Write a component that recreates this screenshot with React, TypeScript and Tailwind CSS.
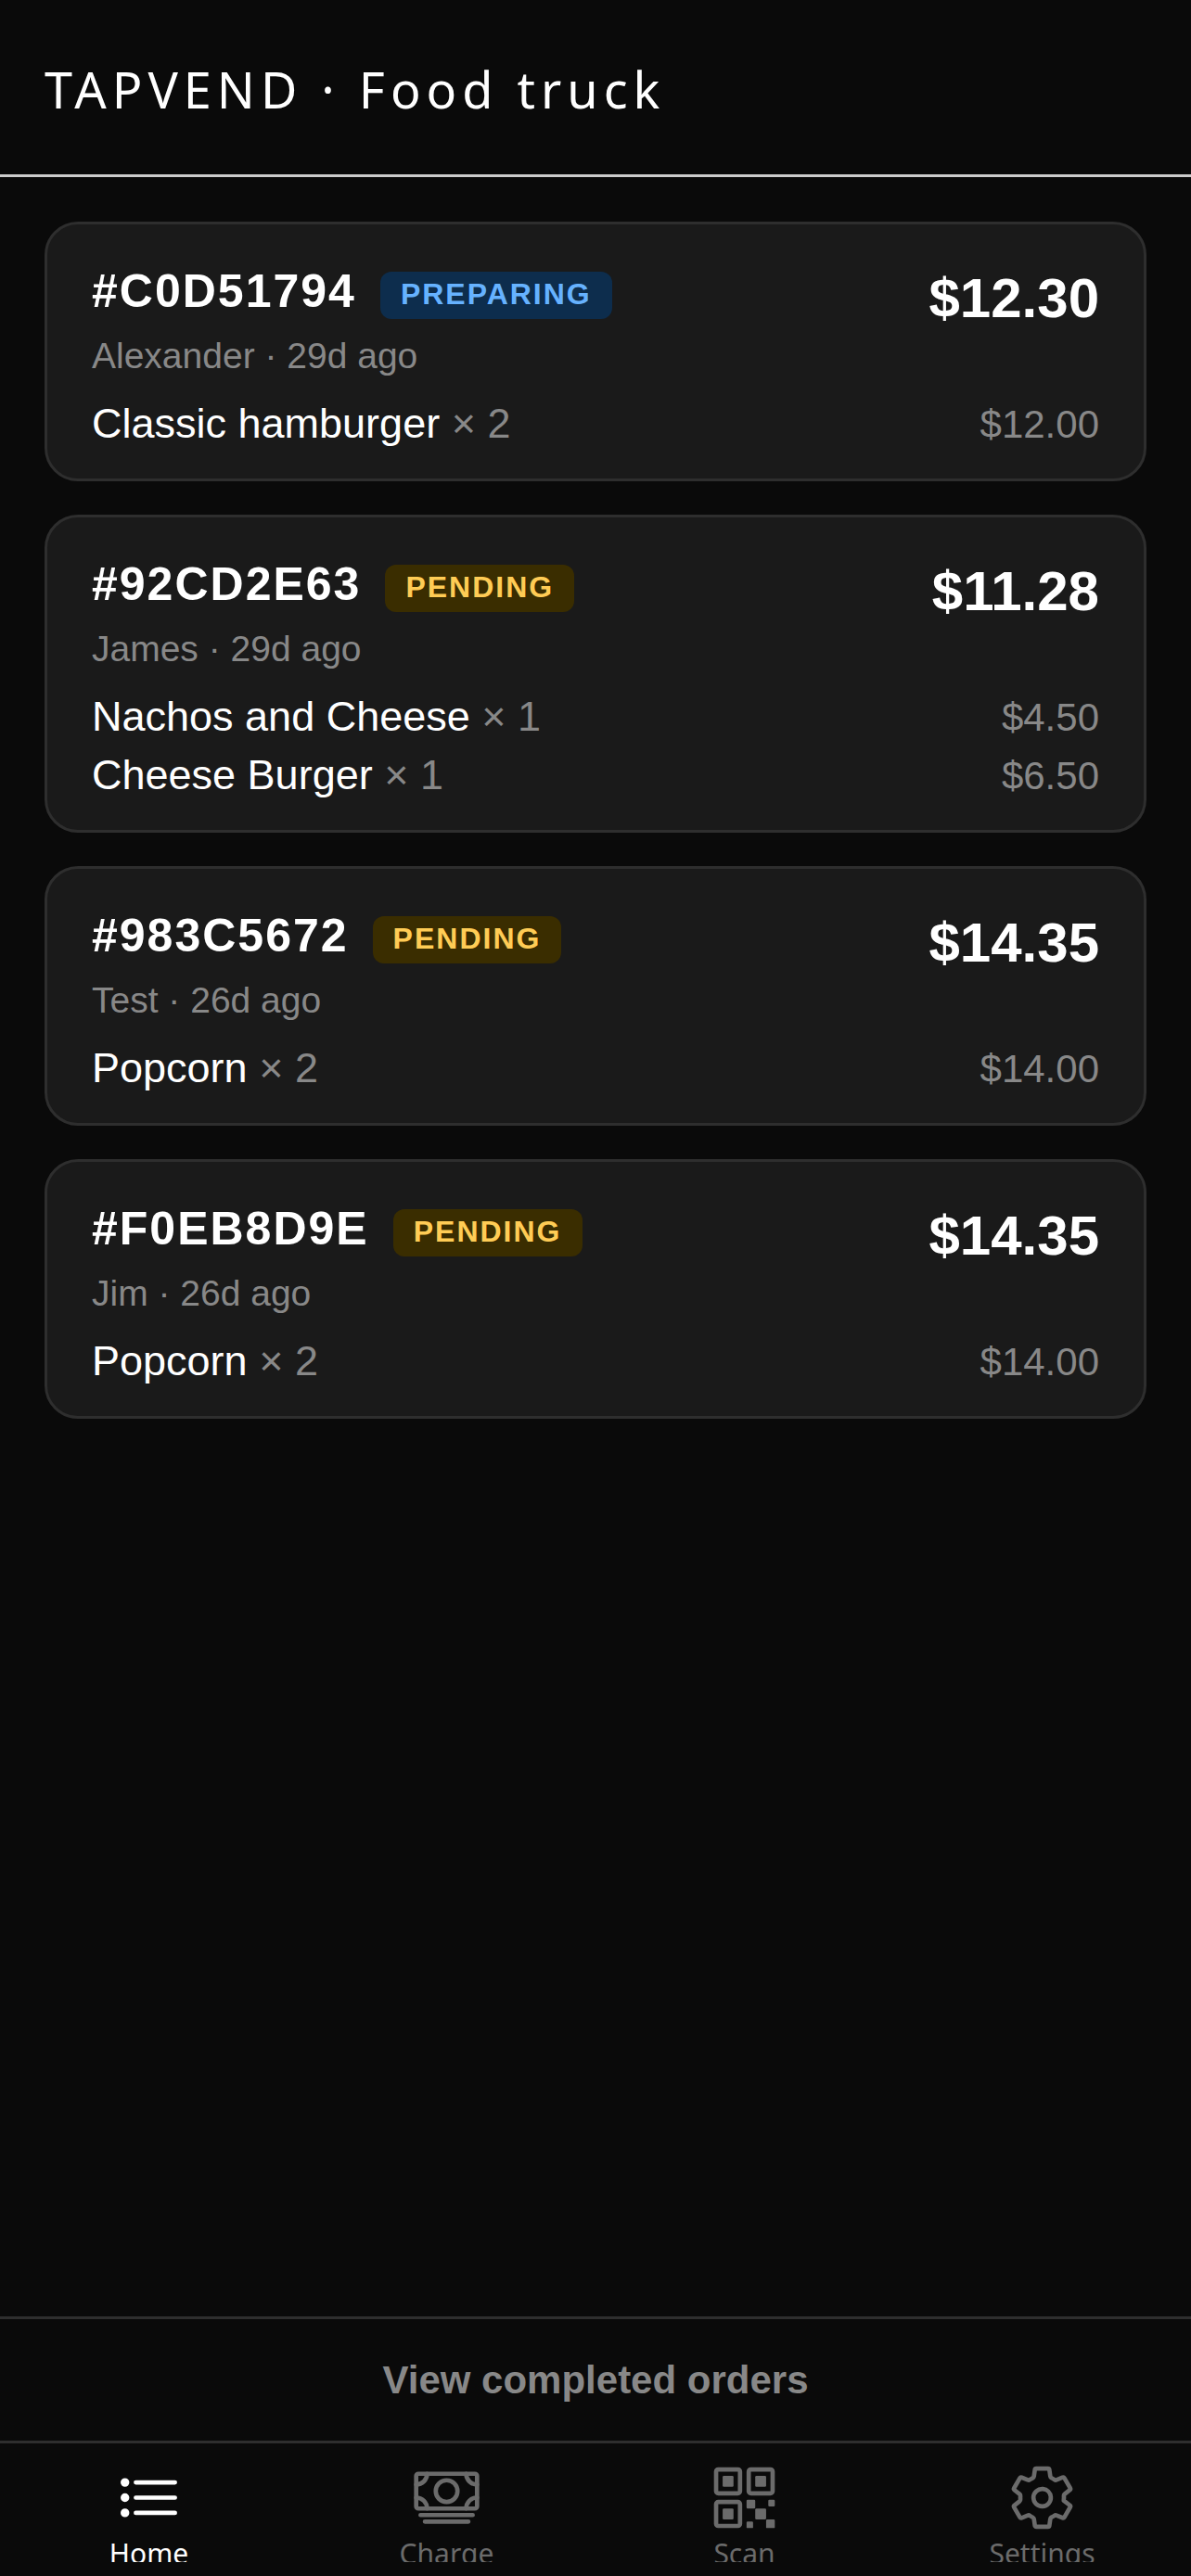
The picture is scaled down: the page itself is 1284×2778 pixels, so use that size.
import type { IconType } from 'react-icons';
import { IoCashOutline, IoListOutline, IoQrCodeOutline, IoSettingsOutline } from 'react-icons/io5';

type Status = 'PREPARING' | 'PENDING';

interface Order {
    id: string;
    status: Status;
    customer: string;
    age: string;
    total: string;
    items: { name: string; qty: number; price: string }[];
}

const orders: Order[] = [
    {
        id: 'C0D51794',
        status: 'PREPARING',
        customer: 'Alexander',
        age: '29d ago',
        total: '$12.30',
        items: [{ name: 'Classic hamburger', qty: 2, price: '$12.00' }],
    },
    {
        id: '92CD2E63',
        status: 'PENDING',
        customer: 'James',
        age: '29d ago',
        total: '$11.28',
        items: [
            { name: 'Nachos and Cheese', qty: 1, price: '$4.50' },
            { name: 'Cheese Burger', qty: 1, price: '$6.50' },
        ],
    },
    {
        id: '983C5672',
        status: 'PENDING',
        customer: 'Test',
        age: '26d ago',
        total: '$14.35',
        items: [{ name: 'Popcorn', qty: 2, price: '$14.00' }],
    },
    {
        id: 'F0EB8D9E',
        status: 'PENDING',
        customer: 'Jim',
        age: '26d ago',
        total: '$14.35',
        items: [{ name: 'Popcorn', qty: 2, price: '$14.00' }],
    },
];

const statusStyles: Record<Status, string> = {
    PREPARING: 'bg-[#0d2d4d] text-[#66b2ff]',
    PENDING: 'bg-[#3a2d00] text-[#ffcc55]',
};

const tabs: { label: string; icon: IconType; active?: boolean }[] = [
    { label: 'Home', icon: IoListOutline, active: true },
    { label: 'Charge', icon: IoCashOutline },
    { label: 'Scan', icon: IoQrCodeOutline },
    { label: 'Settings', icon: IoSettingsOutline },
];

const OrderCard = ({ order }: { order: Order }) => (
    <li className="rounded-[36px] border-3 border-[#2e2e2e] bg-[#1a1a1a] px-12 pt-[46px] pb-[34px]">
        <div className="flex items-start justify-between">
            <div>
                <div className="flex items-end gap-[26px]">
                    <h2 className="pb-1 text-[50px] leading-[52px] font-bold tracking-[2px] text-white">#{order.id}</h2>
                    <span className={`rounded-xl px-[22px] pt-[7px] pb-[9px] text-[32px] leading-[35px] font-bold tracking-[2px] ${statusStyles[order.status]}`}>
                        {order.status}
                    </span>
                </div>
                <p className="mt-4 text-[39px] leading-[48px] text-[#888]">
                    {order.customer} · {order.age}
                </p>
            </div>
            <div className="text-[60px] leading-[68px] font-bold text-white">{order.total}</div>
        </div>
        <ul className="mt-[23px] flex flex-col gap-3">
            {order.items.map((item) => (
                <li key={item.name} className="flex items-baseline justify-between text-[45px] leading-[51px] text-white">
                    <span>
                        {item.name} <span className="text-[#888]">× {item.qty}</span>
                    </span>
                    <span className="text-[42px] leading-[47px] text-[#888]">{item.price}</span>
                </li>
            ))}
        </ul>
    </li>
);

const TabBar = () => (
    <nav className="flex border-t-3 border-[#2e2e2e] pt-[21px] pb-[15px] font-['Noto_Sans',sans-serif]">
        {tabs.map(({ label, icon: Icon, active }) => (
            <a
                key={label}
                href="#"
                className={`flex flex-1 flex-col items-center ${active ? 'text-white' : 'text-[#6b6b6b]'}`}
            >
                <Icon className="size-[75px]" />
                <span className="mt-0.5 h-[30px] overflow-hidden text-[30px] leading-[41px]">{label}</span>
            </a>
        ))}
    </nav>
);

export default function App() {
    return (
        <div className="flex min-h-screen flex-col bg-[#0a0a0a] font-['Liberation_Sans',Arial,sans-serif]">
            <header className="border-b-3 border-[#ccc] px-12 pt-[59px] pb-[55px]">
                <h1 className="font-['Noto_Sans',sans-serif] text-[54px] leading-[74px] tracking-[6px] text-white">
                    TAPVEND · Food truck
                </h1>
            </header>
            <main className="flex-1 p-12">
                <ul className="flex flex-col gap-9">
                    {orders.map((order) => (
                        <OrderCard key={order.id} order={order} />
                    ))}
                </ul>
            </main>
            <button className="border-t-3 border-[#2e2e2e] py-[42px] text-[42px] leading-[47px] font-bold text-[#888]">
                View completed orders
            </button>
            <TabBar />
        </div>
    );
}
